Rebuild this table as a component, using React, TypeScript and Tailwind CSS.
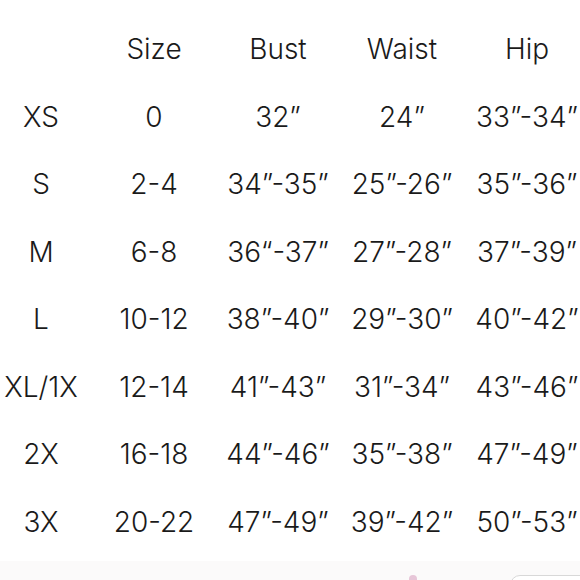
import React from 'react';

const headers = ['', 'Size', 'Bust', 'Waist', 'Hip'];

const rows = [
  ['XS', '0', '32”', '24”', '33”-34”'],
  ['S', '2-4', '34”-35”', '25”-26”', '35”-36”'],
  ['M', '6-8', '36“-37”', '27”-28”', '37”-39”'],
  ['L', '10-12', '38”-40”', '29”-30”', '40”-42”'],
  ['XL/1X', '12-14', '41”-43”', '31”-34”', '43”-46”'],
  ['2X', '16-18', '44”-46”', '35”-38”', '47”-49”'],
  ['3X', '20-22', '47”-49”', '39”-42”', '50”-53”'],
];

const cols = 'grid grid-cols-[82px_144px_104px_144px_106px] items-center';

export default function App() {
  return (
    <div className="w-[580px] h-[580px] bg-white overflow-hidden flex flex-col text-[#1a1a1a] font-light text-[28px] leading-none" style={{ fontFamily: 'Inter, "Noto Sans", sans-serif' }}>
      <div className="h-[561px] shrink-0 pt-[14px] flex flex-col">
        <div className={`${cols} h-[69px]`}>
          {headers.map((h, i) => (
            <div key={i} className="text-center whitespace-nowrap">{h}</div>
          ))}
        </div>
        {rows.map((r) => (
          <div key={r[0]} className={`${cols} h-[67.5px]`}>
            {r.map((c, i) => (
              <div key={i} className="text-center whitespace-nowrap">{c}</div>
            ))}
          </div>
        ))}
      </div>
      <div className="flex-1 min-h-0 overflow-hidden bg-[#fbfafa] flex items-start pt-[14px]">
        <div className="ml-[409px] shrink-0 w-[8px] h-[6px] rounded-t-sm bg-[#e7c6d8]" />
        <div className="ml-[93px] shrink-0 w-[90px] h-[20px] rounded-[10px] border border-[#d8d8d8] bg-white" />
      </div>
    </div>
  );
}
